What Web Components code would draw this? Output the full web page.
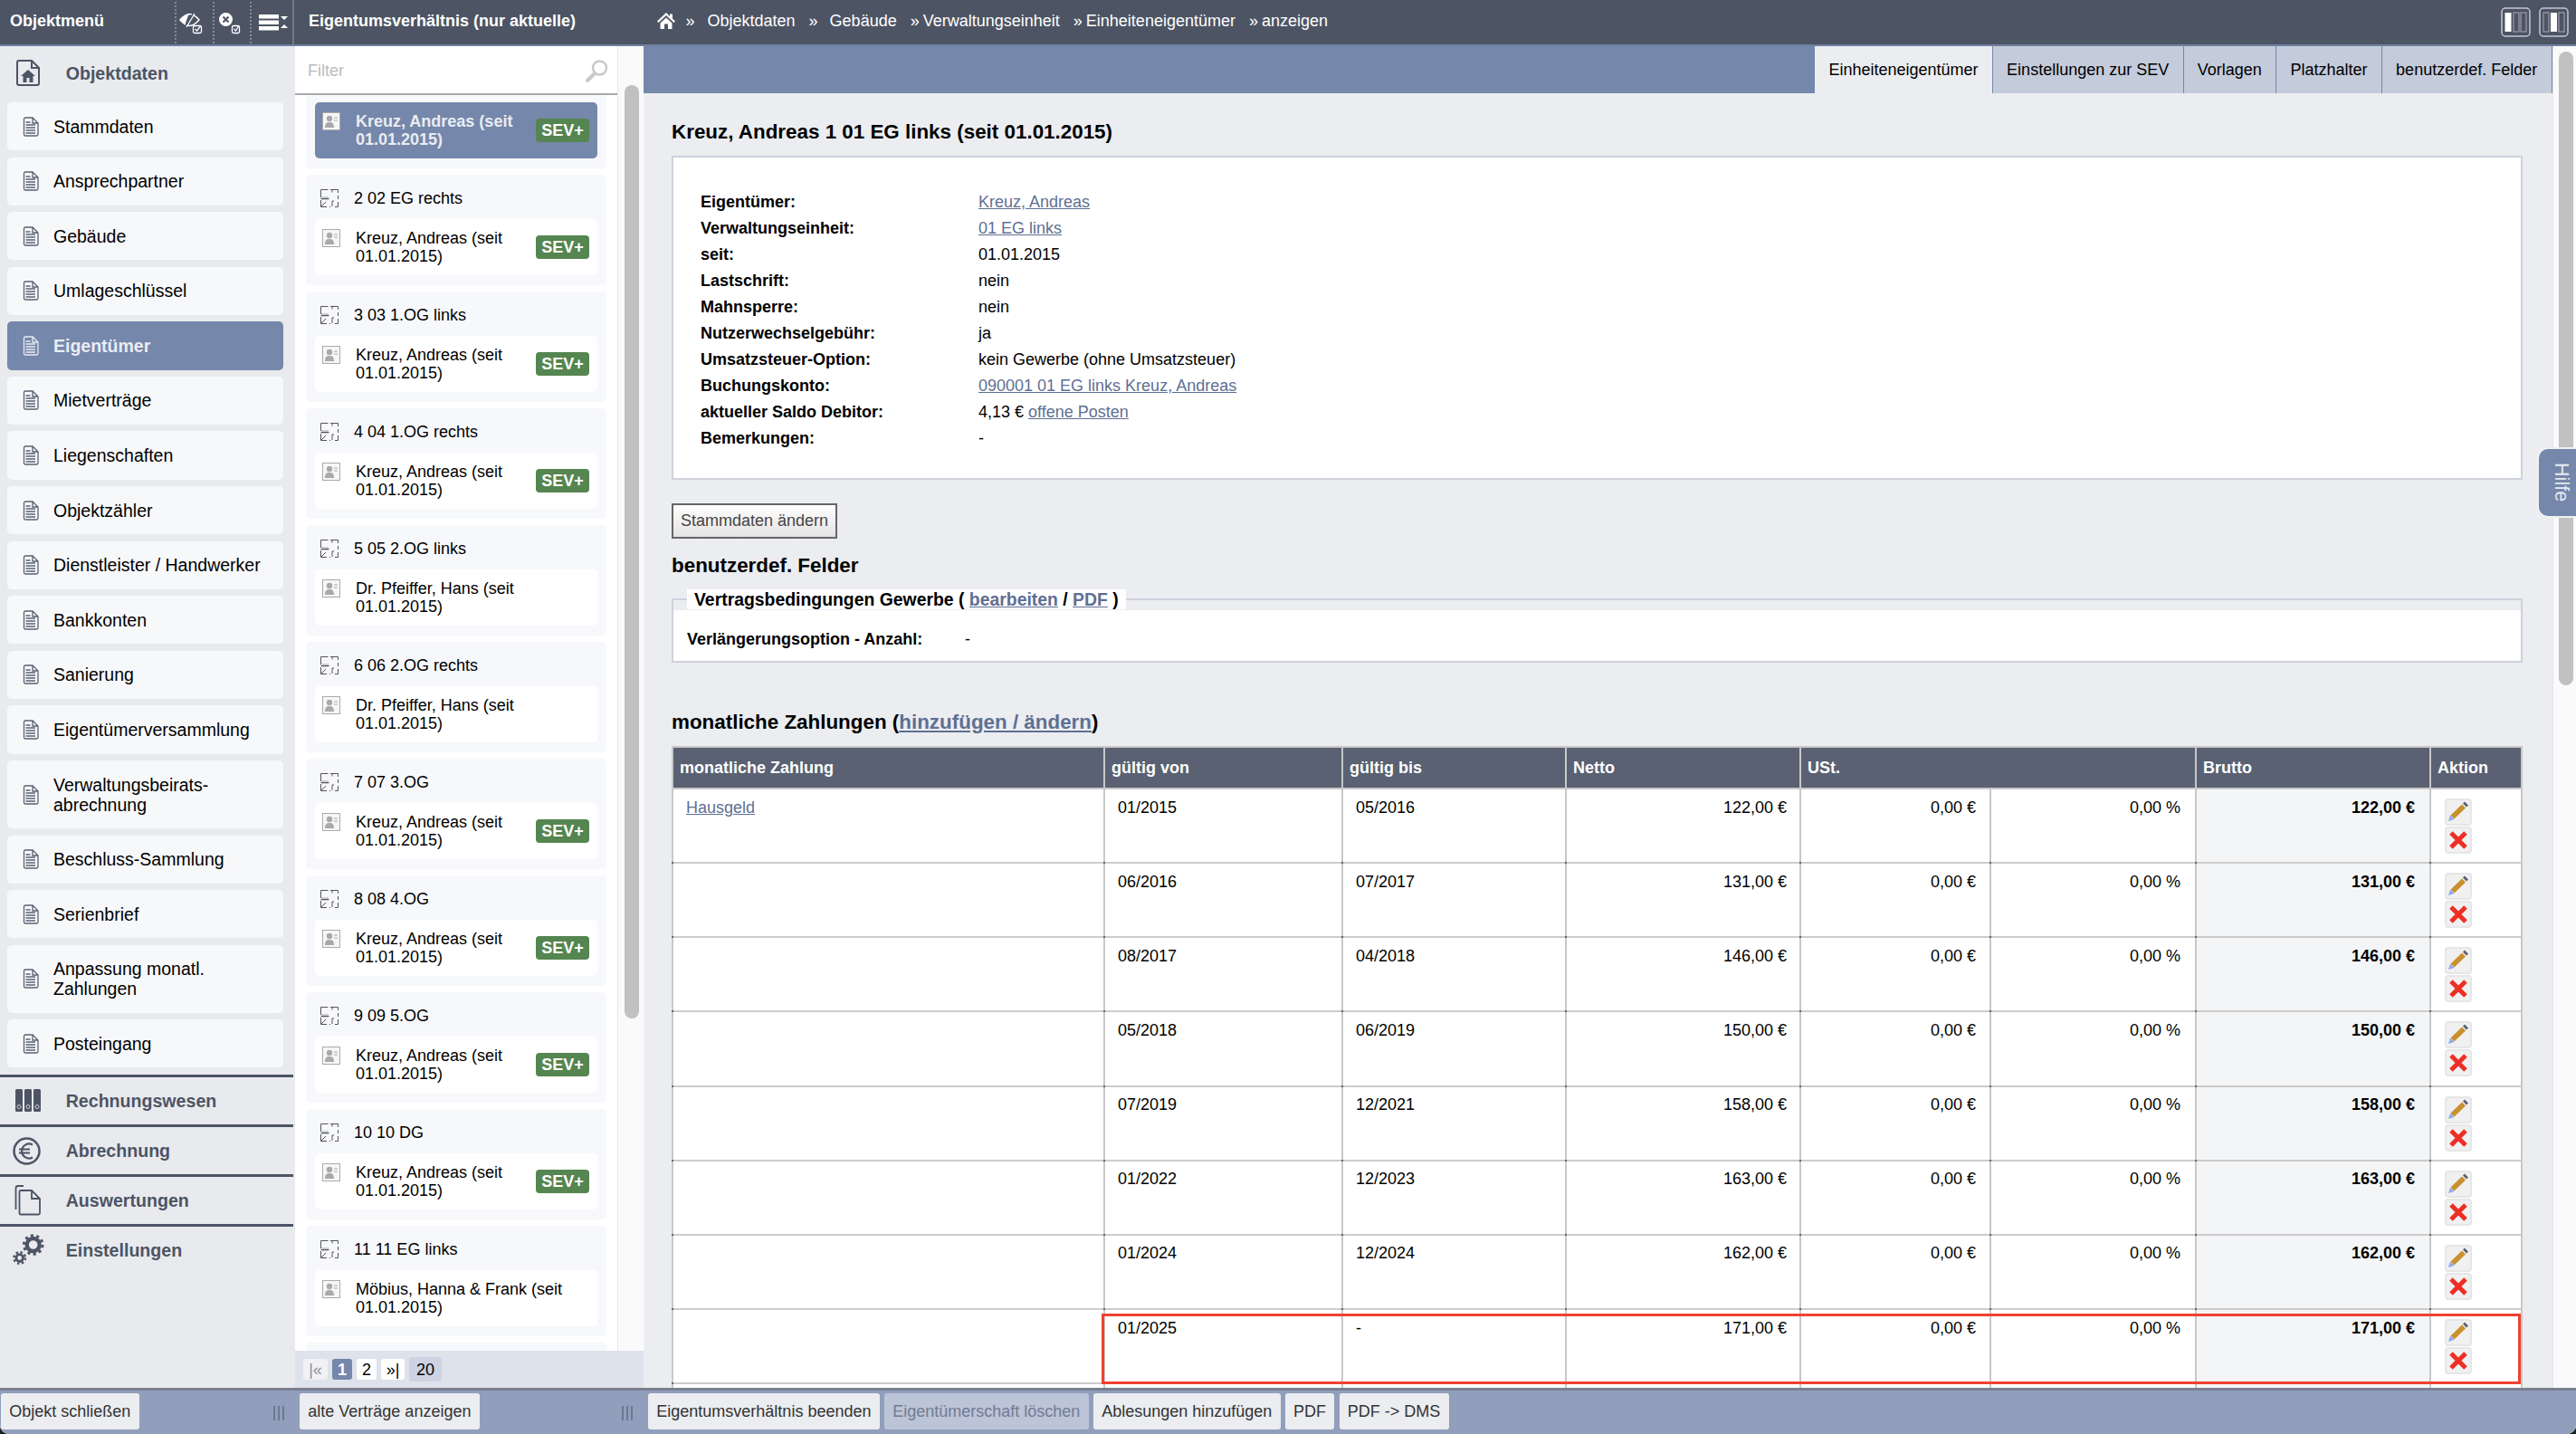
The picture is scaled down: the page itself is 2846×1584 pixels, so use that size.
<!doctype html>
<html lang="de">
<head>
<meta charset="utf-8">
<title>Objektdaten</title>
<style>
  html, body { margin: 0; height: 100%; background: #1c211c; overflow: hidden; }
  body { font: 18px/20px "Liberation Sans", Arial, sans-serif; color: #000; }
</style>
</head>
<body>
<app-shell>
  <side-menu slot="side">
    <menu-section slot="head" first label="Objektdaten">
      <svg slot="icon" width="36" height="36" viewBox="0 0 36 36" fill="none" stroke="#4d5464" stroke-width="2"><path d="M7 4h14l8 8v17a2 2 0 0 1-2 2H7a2 2 0 0 1-2-2V6a2 2 0 0 1 2-2zM21 4v8h8"/><path d="M9 21l8-7 8 7h-2.500v7h-4v-5h-3v5h-4v-7z" fill="#4d5464" stroke="none"/></svg>
    </menu-section>
    <side-item>Stammdaten</side-item>
    <side-item>Ansprechpartner</side-item>
    <side-item>Gebäude</side-item>
    <side-item>Umlageschlüssel</side-item>
    <side-item active>Eigentümer</side-item>
    <side-item>Mietverträge</side-item>
    <side-item>Liegenschaften</side-item>
    <side-item>Objektzähler</side-item>
    <side-item>Dienstleister / Handwerker</side-item>
    <side-item>Bankkonten</side-item>
    <side-item>Sanierung</side-item>
    <side-item>Eigentümerversammlung</side-item>
    <side-item>Verwaltungsbeirats-<br>abrechnung</side-item>
    <side-item>Beschluss-Sammlung</side-item>
    <side-item>Serienbrief</side-item>
    <side-item>Anpassung monatl.<br>Zahlungen</side-item>
    <side-item>Posteingang</side-item>
    <menu-section slot="foot" label="Rechnungswesen">
      <svg slot="icon" width="36" height="36" viewBox="0 0 36 36" fill="#4d5464"><rect x="3" y="5" width="8" height="25" rx="1.500"/><rect x="13" y="5" width="8" height="25" rx="1.500"/><rect x="23" y="5" width="8" height="25" rx="1.500"/><g fill="none" stroke="#c8ccd6" stroke-width="1"><circle cx="7" cy="24.500" r="2"/><circle cx="17" cy="24.500" r="2"/><circle cx="27" cy="24.500" r="2"/></g></svg>
    </menu-section>
    <menu-section slot="foot" label="Abrechnung">
      <svg slot="icon" width="36" height="36" viewBox="0 0 36 36" fill="none" stroke="#4d5464"><circle cx="15.500" cy="18.500" r="14" stroke-width="2.500"/><path d="M22 11.500a8 8 0 1 0 0 14" stroke-width="2.200"/><path d="M7 16.500h12M7 20.500h12" stroke-width="2"/></svg>
    </menu-section>
    <menu-section slot="foot" label="Auswertungen">
      <svg slot="icon" width="36" height="36" viewBox="0 0 36 36" fill="none" stroke="#4d5464" stroke-width="1.800"><path d="M12 2H6a2.500 2.500 0 0 0-2.500 2.500V28"/><path d="M9 7h12l9 9v16a1.500 1.500 0 0 1-1.500 1.500H9A1.500 1.500 0 0 1 7.500 32V8.500A1.500 1.500 0 0 1 9 7zM21 7v9h9"/></svg>
    </menu-section>
    <menu-section slot="foot" label="Einstellungen">
      <svg slot="icon" width="36" height="36" viewBox="0 0 36 36" fill="none" stroke="#4d5464"><circle cx="22.700" cy="12" r="7" stroke-width="4.400"/><circle cx="22.700" cy="12" r="10.300" stroke-width="3" stroke-dasharray="3.200 3.270"/><circle cx="7.700" cy="26.500" r="3.800" stroke-width="2.800"/><circle cx="7.700" cy="26.500" r="6.300" stroke-width="2.400" stroke-dasharray="2.500 2.450"/></svg>
    </menu-section>
    <bar-button slot="bottom">Objekt schließen</bar-button>
  </side-menu>

  <unit-panel slot="list">
    <unit-card owner="Kreuz, Andreas (seit 01.01.2015)" sev active></unit-card>
    <unit-card unit="2 02 EG rechts" owner="Kreuz, Andreas (seit 01.01.2015)" sev></unit-card>
    <unit-card unit="3 03 1.OG links" owner="Kreuz, Andreas (seit 01.01.2015)" sev></unit-card>
    <unit-card unit="4 04 1.OG rechts" owner="Kreuz, Andreas (seit 01.01.2015)" sev></unit-card>
    <unit-card unit="5 05 2.OG links" owner="Dr. Pfeiffer, Hans (seit 01.01.2015)"></unit-card>
    <unit-card unit="6 06 2.OG rechts" owner="Dr. Pfeiffer, Hans (seit 01.01.2015)"></unit-card>
    <unit-card unit="7 07 3.OG" owner="Kreuz, Andreas (seit 01.01.2015)" sev></unit-card>
    <unit-card unit="8 08 4.OG" owner="Kreuz, Andreas (seit 01.01.2015)" sev></unit-card>
    <unit-card unit="9 09 5.OG" owner="Kreuz, Andreas (seit 01.01.2015)" sev></unit-card>
    <unit-card unit="10 10 DG" owner="Kreuz, Andreas (seit 01.01.2015)" sev></unit-card>
    <unit-card unit="11 11 EG links" owner="Möbius, Hanna &amp; Frank (seit 01.01.2015)"></unit-card>
    <unit-card></unit-card>
    <bar-button slot="bottom">alte Verträge anzeigen</bar-button>
  </unit-panel>

  <detail-pane slot="main">
    <page-tab slot="tabs" active>Einheiteneigentümer</page-tab>
    <page-tab slot="tabs">Einstellungen zur SEV</page-tab>
    <page-tab slot="tabs">Vorlagen</page-tab>
    <page-tab slot="tabs">Platzhalter</page-tab>
    <page-tab slot="tabs">benutzerdef. Felder</page-tab>

    <owner-details></owner-details>
    <pay-table></pay-table>

    <bar-button slot="bottom">Eigentumsverhältnis beenden</bar-button>
    <bar-button slot="bottom" disabled>Eigentümerschaft löschen</bar-button>
    <bar-button slot="bottom">Ablesungen hinzufügen</bar-button>
    <bar-button slot="bottom">PDF</bar-button>
    <bar-button slot="bottom">PDF -&gt; DMS</bar-button>
  </detail-pane>
</app-shell>

<script>
const DOC_ICON = `<svg width="18" height="22" viewBox="0 0 18 22" fill="none" stroke="currentColor" stroke-width="1.300"><path d="M3 1h8l6 6v12.500a1.500 1.500 0 0 1-1.500 1.500h-12.500a1.500 1.500 0 0 1-1.500-1.500v-17a1.500 1.500 0 0 1 1.500-1.500zM11 1v6h6"/><path d="M3.500 9h10.500M3.500 12h10.500M3.500 15h10.500M3.500 18h10.500M3.500 6h5"/></svg>`;
const PLAN_ICON = `<svg width="20" height="20" viewBox="0 0 20 20" fill="none" stroke="#555" stroke-width="1"><path d="M.5 9V.5h8M11 .5h8.500V4M19.500 7v4M19.500 14v5.500H16M11 19.500H10M7 19.500H.5V12"/><path d="M13 .5v3M13 13v6M13 13h2M.5 10.500h9" /><path d="M1.500 9h7M1.500 11h7" stroke-dasharray="1 1"/><path d="M1 19l5-5"/></svg>`;
const PERSON_ICON = `<svg width="20" height="20" viewBox="0 0 20 20"><rect x=".5" y=".5" width="19" height="19" fill="#f6f6f6" stroke="#aaa"/><circle cx="8" cy="7" r="3.200" fill="#a9a9a9"/><path d="M3 17c0-5 2-6 5-6s5 1 5 6z" fill="#a9a9a9"/><path d="M13 6h4M13 9h4" stroke="#aaa"/></svg>`;
const PENCIL_ICON = `<svg width="26" height="26" viewBox="2 2 26 26"><path d="M4 25l2-6.500 4.500 4.500z" fill="#8eaaf0"/><path d="M6.500 18.500L19 6.500l4 4-12.500 12z" fill="#c9902f"/><path d="M20 5.500l2-2 4 4-2 2z" fill="#5a6173"/></svg>`;
const CROSS_ICON = `<svg width="26" height="26" viewBox="2 2 26 26"><path d="M7 7l16 16M23 7L7 23" stroke="#ee2e24" stroke-width="5"/></svg>`;

// small helper, every element gets its own open shadow root
function comp(name, css, html, init) {
  customElements.define(name, class extends HTMLElement {
    constructor() {
      super();
      this.attachShadow({ mode: 'open' });
      this.shadowRoot.innerHTML = `<style>${css}</style>${typeof html === 'function' ? html(this) : html}`;
    }
    connectedCallback() {
      if (init) init(this);
    }
  });
}

comp('app-shell', `
  :host { display: flex; width: 100vw; height: 100vh; overflow: hidden; border-radius: 0 0 10px 10px; background: #e8eaee; }
  ::slotted([slot=side]) { flex: 0 0 326px; }
  ::slotted([slot=list]) { flex: 0 0 385px; }
  ::slotted([slot=main]) { flex: 1 1 0; min-width: 0; }
`, `<slot name="side"></slot><slot name="list"></slot><slot name="main"></slot>`);

comp('top-strip', `
  :host { display: flex; align-items: center; height: 46.500px; padding-bottom: 2.500px; background: #4d5464; border-bottom: 2px solid #6f7f9f;
    color: #fff; font: 18px/20px "Liberation Sans", Arial, sans-serif; flex: none; white-space: nowrap; }
`, `<slot></slot>`);

comp('bottom-strip', `
  :host { display: flex; align-items: flex-start; gap: 5.200px; height: 45px; background: #919fbc; border-top: 3px solid #7b7f90;
    padding: 3px 5px 0; box-sizing: content-box; flex: none; position: relative; }
  .grip { position: absolute; right: var(--grip-right, 11px); top: 17px; width: 13px; height: 16px;
    background: repeating-linear-gradient(90deg, #6d7890 0 2px, transparent 2px 5px); }
  :host([nogrip]) .grip { display: none; }
`, `<slot></slot><span class="grip"></span>`);

comp('bar-button', `
  :host { display: block; height: 40px; padding: 0 9.300px; background: #ebedf1; border-radius: 3px;
    color: #333; font: 18px/40px "Liberation Sans", Arial, sans-serif; white-space: nowrap; }
  :host([disabled]) { background: #bcc4d8; color: #717b92; }
`, `<slot></slot>`);

comp('side-item', `
  :host { display: flex; align-items: center; box-sizing: border-box; margin: 0 13px 7.400px 8px;
    padding: 15.600px 0 15.600px 17px; background: #f7f8fa; border-radius: 5px; color: #000;
    font: 19.500px/22px "Liberation Sans", Arial, sans-serif; }
  .ico { flex: 0 0 34px; display: flex; color: #5a6173; height: 22px; align-items: center; }
  :host([active]) { background: #7587aa; color: #e9ecf3; font-weight: bold; }
  :host([active]) .ico { color: #e9ecf3; }
`, `<span class="ico">${DOC_ICON}</span><span><slot></slot></span>`);

comp('menu-section', `
  :host { display: flex; align-items: center; height: 55px; box-sizing: border-box; border-top: 3px solid #4d5464; padding-left: 14px;
    color: #4d5464; font: bold 19.600px/24px "Liberation Sans", Arial, sans-serif; margin-right: 2px; }
  :host([first]) { border-top: 0; height: 62px; padding-bottom: 3px; }
  .ico { flex: 0 0 36px; height: 36px; margin-right: 22.700px; }
`, e => `<span class="ico"><slot name="icon"></slot></span><span>${e.getAttribute('label')}</span>`);

comp('side-menu', `
  :host { display: flex; flex-direction: column; height: 100vh; background: #e8eaee; box-sizing: border-box; }
  .title { font-weight: bold; margin-left: 11px; width: 182px; }
  .cell { height: 46px; border-left: 2px dotted #848b9b; position: relative; box-sizing: border-box; align-self: flex-start; margin-top: 2px; }
  .c1 { width: 42px; } .c2 { width: 41px; }
  .c3 { width: 49px; height: 49px; margin-top: 0; border-left: 0; border-right: 2px solid #707888; }
  .c3::before { content: ""; position: absolute; left: 0; top: 2px; height: 46px; border-left: 2px dotted #848b9b; }
  .cell svg { position: absolute; left: 0; top: 0; }
  .c3 svg { top: 2px; left: 2px; }
  .body { flex: 1 1 0; min-height: 0; }
  .foot { padding-top: .500px; }
  bottom-strip { margin-top: auto; --grip-right: 11px; }
`, `
  <top-strip>
    <span class="title">Objektmenü</span>
    <span class="cell c1"><svg width="40" height="46" viewBox="0 0 40 46" fill="none" stroke="#fff"><path d="M4 20c3.500-4 7-6.500 10.500-6.500s7 2.500 10.500 6.500c-3.500 4-7 6.500-10.500 6.500s-7-2.500-10.500-6.500z" stroke-width="1.400"/><path d="M4.500 20c3-3.500 5.500-5.500 9-6.200l-4 11c-2-1-3.500-2.500-5-4.800z" fill="#fff" stroke="none"/><path d="M9 28L19 12" stroke-width="1.600" stroke="#4d5464"/><path d="M11 28L20 13" stroke-width="1.300"/><rect x="18.500" y="26.500" width="9" height="8" rx="1.500" stroke-width="1.300" fill="#4d5464"/><path d="M20.500 30l2 2 4-5" stroke-width="1.300"/></svg></span>
    <span class="cell c2"><svg width="40" height="46" viewBox="0 0 40 46"><circle cx="12.500" cy="19.500" r="7.500" fill="#fff"/><path d="M9.500 16.500l6 6M15.500 16.500l-6 6" stroke="#4d5464" stroke-width="2"/><rect x="19.500" y="26.500" width="8" height="8" rx="1.500" fill="none" stroke="#fff" stroke-width="1.300"/><path d="M21.500 30l2 2 3-5" fill="none" stroke="#fff" stroke-width="1.300"/></svg></span>
    <span class="cell c3"><svg width="44" height="46" viewBox="0 0 44 46" fill="#fff"><rect x="8" y="14" width="22" height="4.500"/><rect x="8" y="20.500" width="22" height="4.500"/><rect x="8" y="27" width="22" height="4.500"/><path d="M32 16h8l-4 4zM32 29h8l-4-4z"/></svg></span>
  </top-strip>
  <div class="body"><slot name="head"></slot><div><slot></slot></div><div class="foot"><slot name="foot"></slot></div></div>
  <bottom-strip><slot name="bottom" style="display:block;margin:0 0 0 -4px"></slot></bottom-strip>
`);

comp('unit-card', `
  :host { display: block; background: #f7f8fb; border-radius: 5px; margin: 0 12px 7px; padding: 0 10px 11px; }
  :host([first]) { padding-top: 8px; border-radius: 0 0 5px 5px; }
  .unit { display: flex; align-items: center; height: 49px; padding: 2px 0 0 6px; box-sizing: border-box; }
  .unit svg { margin-right: 17px; }
  .item { display: flex; align-items: flex-start; min-height: 62px; box-sizing: border-box; padding: 11px 9px 11px 8px; background: #fff; border-radius: 5px; }
  .item svg { flex: none; margin-right: 17px; }
  .name { flex: 1 1 0; min-width: 0; }
  .sev { flex: none; align-self: center; width: 59px; height: 26px; line-height: 26px; text-align: center; background: #558550; color: #fff; font-weight: bold; border-radius: 4px; font-size: 18px; }
  .item.active { background: #7587aa; color: #e9ecf3; font-weight: bold; }
`, e => e.hasAttribute('owner') ? `
  ${e.hasAttribute('unit') ? `<div class="unit">${PLAN_ICON}<span>${e.getAttribute('unit')}</span></div>` : ''}
  <div class="item ${e.hasAttribute('active') ? 'active' : ''}">${PERSON_ICON}<span class="name">${e.getAttribute('owner').replace('&', '&amp;')}</span>${e.hasAttribute('sev') ? '<span class="sev">SEV+</span>' : ''}</div>
` : '<div style="height:40px"></div>', e => { if (e.hasAttribute('active')) e.setAttribute('first', ''); });

comp('unit-panel', `
  :host { display: flex; flex-direction: column; height: 100vh; background: #fff; }
  .head { font-weight: bold; padding-left: 15px; border-left: 0; }
  .row { flex: 1 1 0; min-height: 0; display: flex; }
  .col { flex: 0 0 356px; display: flex; flex-direction: column; min-height: 0; }
  .filter { flex: none; display: flex; align-items: center; justify-content: space-between; border-bottom: 2px solid #aaa; padding: 2px 9px 0 14px; box-sizing: content-box; height: 50px; color: #bbb; }
  .list { flex: 1 1 0; min-height: 0; overflow: hidden; }
  .track { flex: 0 0 27px; margin-right: 1px; border-left: 1px solid #e6e6e6; background: #fafafa; padding: 43px 4px 0 7px; box-sizing: border-box; }
  .thumb { width: 16px; height: 1031px; background: #c1c1c1; border-radius: 8px; }
  .pager { flex: none; height: 41px; background: #dde2eb; display: flex; align-items: center; padding-left: 9px; gap: 5px; box-sizing: border-box; }
  .pager span { display: flex; align-items: center; justify-content: center; height: 23px; width: 22px; border-radius: 3px; background: #fff; font-size: 18px; }
  .pager .off { width: 27px; background: #f1f2f5; color: #8a8f9a; }
  .pager .on { background: #7587aa; color: #fff; font-weight: bold; }
  .pager .last { width: 26px; }
  .pager .count { width: 36px; height: 27px; background: #cdd3e2; }
  bottom-strip { padding-left: 5px; --grip-right: 11px; }
`, `
  <top-strip class="head">Eigentumsverhältnis (nur aktuelle)</top-strip>
  <div class="row">
    <div class="col">
      <div class="filter"><span>Filter</span>
        <svg width="27" height="25" viewBox="0 0 27 25" fill="none" stroke="#c9c9c9"><circle cx="16.500" cy="9" r="7.500" stroke-width="2.500"/><path d="M11 15l-8 8" stroke-width="4" stroke-linecap="round"/></svg>
      </div>
      <div class="list"><slot></slot></div>
    </div>
    <div class="track"><div class="thumb"></div></div>
  </div>
  <div class="pager"><span class="off">|«</span><span class="on">1</span><span>2</span><span class="last">»|</span><span class="count">20</span></div>
  <bottom-strip><slot name="bottom"></slot></bottom-strip>
`);

comp('page-tab', `
  :host { display: block; height: 52px; line-height: 52px; padding: 0 15.300px; background: #c4cbdb; color: #000; border-left: 1.500px solid #7587aa; font-size: 18px; white-space: nowrap; }
  :host([active]) { background: #ebedf1; border-left: 0; }
`, `<slot></slot>`);

comp('help-tab', `
  :host { position: absolute; right: 0; top: 494px; width: 43px; height: 78px; box-sizing: border-box; background: #7587aa;
    border: 2px solid #f0f1f5; border-right: 0; border-radius: 12px 0 0 12px; color: #e6eaf2; font-size: 21.600px;
    writing-mode: vertical-rl; line-height: 22px; padding: 15px 5px 0 0; text-align: left; display: block; }
`, `<slot></slot>`);

comp('detail-pane', `
  :host { display: flex; flex-direction: column; height: 100vh; position: relative; background: #ebedf1; }
  .crumbs { padding-left: 14.500px; }
  .home { flex: none; margin-right: 12px; }
  .sep { margin-right: 14px; } .sep.n { margin-right: 4px; }
  .lnk { margin-right: 15px; }
  .views { margin-left: auto; display: flex; gap: 9px; margin-right: 8px; margin-top: 2px; }
  .row { flex: 1 1 0; min-height: 0; display: flex; }
  .col { flex: 1 1 0; min-width: 0; display: flex; flex-direction: column; }
  .tabs { flex: none; height: 52px; background: #7587aa; display: flex; justify-content: flex-end; padding-right: 1.500px; }
  .content { flex: 1 1 0; min-height: 0; overflow: hidden; padding: 0 33px 0 31px; }
  .track { flex: 0 0 26px; box-sizing: border-box; background: #fafafa; border-left: 1px solid #e6e6e6; padding: 6px 3px 0 6px; }
  .thumb { width: 16px; height: 700px; background: #c1c1c1; border-radius: 8px; }
`, `
  <top-strip class="crumbs">
    <svg class="home" width="20" height="18" viewBox="0 0 20 18" fill="#fff"><path d="M10 0L0 9.500l1.500 1.500L10 3l8.500 8 1.500-1.500-3-2.800V1.500h-3v2.400zM3.500 11.500L10 5.500l6.500 6V18h-4.500v-5.500H8V18H3.500z"/></svg>
    <span class="sep">»</span><span class="lnk">Objektdaten</span>
    <span class="sep" style="margin-right:13px">»</span><span class="lnk">Gebäude</span>
    <span class="sep n">»</span><span class="lnk">Verwaltungseinheit</span>
    <span class="sep n">»</span><span class="lnk">Einheiteneigentümer</span>
    <span class="sep n">»</span><span>anzeigen</span>
    <span class="views">
      <svg width="33" height="33" viewBox="0 0 33 33"><rect x="1" y="1" width="31" height="31" rx="4" fill="none" stroke="#c4c8d0" stroke-width="1.500"/><rect x="4.500" y="6" width="7" height="21" fill="#fff"/><rect x="14" y="6" width="6" height="21" fill="none" stroke="#aab" /><rect x="22" y="6" width="6" height="21" fill="none" stroke="#aab"/></svg>
      <svg width="33" height="33" viewBox="0 0 33 33"><rect x="1" y="1" width="31" height="31" rx="4" fill="none" stroke="#c4c8d0" stroke-width="1.500"/><rect x="5" y="6" width="6" height="21" fill="none" stroke="#aab"/><rect x="13" y="6" width="7" height="21" fill="#fff"/><rect x="22" y="6" width="6" height="21" fill="none" stroke="#aab"/></svg>
    </span>
  </top-strip>
  <div class="row">
    <div class="col">
      <div class="tabs"><slot name="tabs"></slot></div>
      <div class="content"><slot></slot></div>
    </div>
    <div class="track"><div class="thumb"></div></div>
  </div>
  <bottom-strip nogrip><slot name="bottom"></slot></bottom-strip>
  <help-tab>Hilfe</help-tab>
`);

const DETAILS = [
  ['Eigentümer:', '<a>Kreuz, Andreas</a>'],
  ['Verwaltungseinheit:', '<a>01 EG links</a>'],
  ['seit:', '01.01.2015'],
  ['Lastschrift:', 'nein'],
  ['Mahnsperre:', 'nein'],
  ['Nutzerwechselgebühr:', 'ja'],
  ['Umsatzsteuer-Option:', 'kein Gewerbe (ohne Umsatzsteuer)'],
  ['Buchungskonto:', '<a>090001 01 EG links Kreuz, Andreas</a>'],
  ['aktueller Saldo Debitor:', '4,13 € <a>offene Posten</a>'],
  ['Bemerkungen:', '-']
];

comp('owner-details', `
  :host { display: block; }
  a { color: #5f6f93; text-decoration: underline; }
  h2 { margin: 0; font: bold 22.400px/26px "Liberation Sans", Arial, sans-serif; }
  .title { margin-top: 29.500px; }
  .box { margin-top: 13.500px; background: #fff; border: 2px solid #cfd1dc; padding: 35px 30px 29px; display: grid; grid-template-columns: 307px 1fr; grid-auto-rows: 29px; line-height: 29px; }
  .btn { display: inline-block; margin-top: 26px; height: 39px; box-sizing: border-box; border: 2px solid #666; line-height: 34px; padding: 0 8px; color: #444; background: linear-gradient(#fff, #e4e2e2); vertical-align: top; }
  .wrap { height: 39px; }
  .sec { margin-top: 43px; }
  fieldset { margin: 13px 0 0; padding: 23px 15px 14px; border: 2px solid #cfd1dc; background: linear-gradient(transparent 11px, #fff 11px); min-width: 0; }
  legend { padding: 0 8px; background: #fff; font: bold 19.400px/22px "Liberation Sans", Arial, sans-serif; }
  .opt { display: grid; grid-template-columns: 307px 1fr; line-height: 20px; }
  .pay { margin-top: 53px; }
`, `
  <h2 class="title">Kreuz, Andreas 1 01 EG links (seit 01.01.2015)</h2>
  <div class="box">${DETAILS.map(d => `<b>${d[0]}</b><span>${d[1]}</span>`).join('')}</div>
  <div class="wrap"><span class="btn">Stammdaten ändern</span></div>
  <h2 class="sec">benutzerdef. Felder</h2>
  <fieldset>
    <legend>Vertragsbedingungen Gewerbe ( <a>bearbeiten</a> / <a>PDF</a> )</legend>
    <div class="opt"><b>Verlängerungsoption - Anzahl:</b><span>-</span></div>
  </fieldset>
  <h2 class="pay">monatliche Zahlungen (<a>hinzufügen / ändern</a>)</h2>
`);

const PAYMENTS = [
  ['01/2015', '05/2016', '122,00 €'],
  ['06/2016', '07/2017', '131,00 €'],
  ['08/2017', '04/2018', '146,00 €'],
  ['05/2018', '06/2019', '150,00 €'],
  ['07/2019', '12/2021', '158,00 €'],
  ['01/2022', '12/2023', '163,00 €'],
  ['01/2024', '12/2024', '162,00 €'],
  ['01/2025', '-', '171,00 €']
];

comp('pay-table', `
  :host { display: block; margin-top: 13px; }
  table { table-layout: fixed; width: 2045px; border-collapse: separate; border-spacing: 0; font-size: 18px; line-height: 20px; }
  th { height: 48px; box-sizing: border-box; background: #5a6173; color: #fff; font-weight: bold; text-align: left; padding: 0 7px 1px; border: 2px solid #c8c8c8; border-right: 0; }
  th:last-child, td:last-child { border-right: 2px solid #c8c8c8; }
  td { height: 82.170px; box-sizing: border-box; vertical-align: top; padding: 9.500px 14px; border-left: 2px solid #c8c8c8; border-bottom: 2px solid #ccc; background: #fff; position: relative; }
  td::after { content: ""; position: absolute; left: -2px; bottom: -2px; width: 2px; height: 2px; background: #666; }
  td.num { text-align: right; padding-right: 16px; }
  td.net { padding-right: 14px; }
  td.ust { padding-right: 15px; }
  td.br { background: #f4f5f7; font-weight: bold; }
  td.act { padding: 10px 0 0 15px; }
  a { color: #5f6f93; text-decoration: underline; }
  .ib { display: block; width: 30px; height: 30px; box-sizing: border-box; background: #f0f0f0; border: 2px solid #e6e6e6; border-radius: 4px; margin-bottom: 1px; }
  .ib svg { display: block; }
  .hl { position: absolute; left: -4.500px; top: 4px; width: 1568px; height: 78px; box-sizing: border-box; border: 3px solid #ef4130; z-index: 2; pointer-events: none; }
`, `
  <table>
    <colgroup><col style="width:477px"><col style="width:263px"><col style="width:247px"><col style="width:259px"><col style="width:210px"><col style="width:227px"><col style="width:259px"><col style="width:103px"></colgroup>
    <thead><tr><th>monatliche Zahlung</th><th>gültig von</th><th>gültig bis</th><th>Netto</th><th colspan="2">USt.</th><th>Brutto</th><th>Aktion</th></tr></thead>
    <tbody>
      ${PAYMENTS.map((p, i) => `<tr>
        <td>${i === 0 ? '<a>Hausgeld</a>' : ''}</td>
        <td>${p[0]}${i === PAYMENTS.length - 1 ? '<div class="hl"></div>' : ''}</td>
        <td>${p[1]}</td>
        <td class="num net">${p[2]}</td>
        <td class="num ust">0,00 €</td>
        <td class="num">0,00 %</td>
        <td class="num br">${p[2]}</td>
        <td class="act"><span class="ib">${PENCIL_ICON}</span><span class="ib">${CROSS_ICON}</span></td>
      </tr>`).join('')}
      <tr><td></td><td></td><td></td><td></td><td></td><td></td><td class="br"></td><td></td></tr>
    </tbody>
  </table>
`);
</script>
</body>
</html>
